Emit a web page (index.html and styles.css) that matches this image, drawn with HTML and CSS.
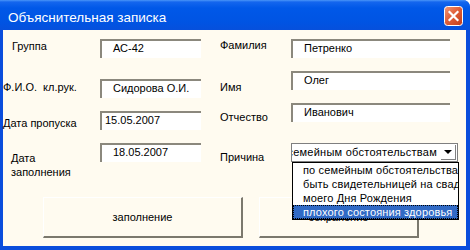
FILE: index.html
```html
<!DOCTYPE html>
<html lang="ru">
  <head>
    <meta charset="UTF-8" />
    <title>Объяснительная записка</title>
    <link rel="stylesheet" href="styles.css">
  </head>
  <body>
    <div class="window">
      <div class="titlebar">
        <span class="title">Объяснительная записка</span>
        <span class="close">
          <svg width="19" height="20" viewBox="0 0 19 20">
            <defs>
              <linearGradient id="cg" x1="0" y1="0" x2="1" y2="1">
                <stop offset="0" stop-color="#f29a78" />
                <stop offset="0.45" stop-color="#e0603a" />
                <stop offset="1" stop-color="#c23c18" />
              </linearGradient>
            </defs>
            <rect x="0.5" y="0.5" width="18" height="19" rx="3" fill="url(#cg)" stroke="#fff" />
            <path d="M5.5 6 L13.5 14 M13.5 6 L5.5 14" stroke="#fff" stroke-width="2.2" stroke-linecap="square" />
          </svg>
        </span>
      </div>
      <div class="client">
        <div class="fields">
          <div class="col left">
            <div class="row l1"><span class="lbl">Группа</span><div class="box">АС-42</div></div>
            <div class="row l2"><span class="lbl">Ф.И.О.&nbsp; кл.рук.</span><div class="box">Сидорова О.И.</div></div>
            <div class="row l3"><span class="lbl">Дата пропуска</span><div class="box tight">15.05.2007</div></div>
            <div class="row l4"><span class="lbl">Дата<br />заполнения</span><div class="box">18.05.2007</div></div>
          </div>
          <div class="col right">
            <div class="row r1"><span class="lbl">Фамилия</span><div class="box">Петренко</div></div>
            <div class="row r2"><span class="lbl">Имя</span><div class="box">Олег</div></div>
            <div class="row r3"><span class="lbl">Отчество</span><div class="box">Иванович</div></div>
            <div class="row r4">
              <span class="lbl">Причина</span>
              <div class="combo">
                <div class="combo-text"><span>по семейным обстоятельствам</span></div>
                <div class="combo-btn"><i class="arrow"></i></div>
                <div class="droplist">
                  <div class="item">по семейным обстоятельствам</div>
                  <div class="item">быть свидетельницей на свадьбе</div>
                  <div class="item">моего Дня Рождения</div>
                  <div class="item sel">плохого состояния здоровья</div>
                </div>
              </div>
            </div>
          </div>
        </div>
        <div class="buttons">
          <div class="btn b1">заполнение</div>
          <div class="btn b2">сохранение</div>
        </div>
      </div>
    </div>
  </body>
</html>
```

FILE: styles.css
```css
* {
  margin: 0;
  padding: 0;
  box-sizing: border-box;
}
html,
body {
  width: 470px;
  height: 250px;
  overflow: hidden;
  background: #fff;
}
body {
  font-family: "Liberation Sans", Arial, sans-serif;
  font-size: 11px;
  line-height: 13px;
  color: #000;
}
.window {
  width: 470px;
  height: 250px;
  background: #0a4ddc;
  border-top-right-radius: 7px;
  display: flex;
  flex-direction: column;
}
.titlebar {
  height: 30px;
  display: flex;
  align-items: center;
  justify-content: space-between;
  padding: 0 7px 0 8px;
  border-top-right-radius: 7px;
  background: linear-gradient(#4a95f8 0, #1466ee 2px, #0058e8 8px, #0054e3 22px, #0650dc 30px);
}
.title {
  color: #fff;
  font-size: 13.5px;
  line-height: 16px;
  padding-top: 5px;
}
.close {
  display: flex;
  margin-top: 2px;
}
.client {
  flex: 1;
  margin: 0 4px 4px 3px;
  background: #fffbf0;
}
.fields {
  display: flex;
  align-items: flex-start;
  padding-top: 9px;
}
.left {
  width: 198px;
}
.right {
  margin-left: 19px;
}
.row {
  display: flex;
  align-items: flex-start;
}
.left .lbl {
  width: 97px;
}
.right .lbl {
  width: 71px;
}
.box {
  height: 19px;
  padding: 1px 0 0 11px;
  background: #fff;
  border-top: 2px solid #8b887d;
  border-left: 2px solid #8b887d;
  white-space: nowrap;
  overflow: hidden;
}
.box.tight {
  padding-left: 3px;
}
.left .box {
  width: 101px;
}
.right .box {
  width: 159px;
}
.l1 {
  height: 40px;
}
.l1 .lbl {
  padding: 1px 0 0 9px;
}
.l2 {
  height: 32px;
}
.l2 .lbl {
  padding-top: 2px;
}
.l3 {
  height: 32px;
}
.l3 .lbl {
  padding-top: 6px;
}
.l4 {
  height: 34px;
}
.l4 .lbl {
  padding: 8px 0 0 8px;
  line-height: 14px;
}
.r1,
.r2 {
  height: 32px;
}
.r2 .lbl {
  padding-top: 10px;
}
.r3 {
  height: 40px;
}
.r3 .lbl,
.r4 .lbl {
  padding-top: 8px;
}
.combo {
  position: relative;
  width: 167px;
  height: 19px;
  display: flex;
  background: #fff;
  border: 1px solid #7f7f7f;
}
.combo-text {
  flex: 1;
  display: flex;
  justify-content: flex-end;
  overflow: hidden;
  white-space: nowrap;
  padding-right: 3px;
  line-height: 17px;
  letter-spacing: 0.25px;
}
.combo-btn {
  width: 15px;
  height: 15px;
  margin: 1px;
  display: flex;
  align-items: center;
  justify-content: center;
  background: #fff;
  border-right: 1px solid #808080;
  border-bottom: 1px solid #808080;
}
.arrow {
  width: 0;
  height: 0;
  border-left: 4px solid transparent;
  border-right: 4px solid transparent;
  border-top: 4px solid #000;
}
.droplist {
  position: absolute;
  left: 0;
  top: 18px;
  width: 167px;
  background: #fff;
  border: 1px solid #000;
  z-index: 2;
}
.item {
  height: 14px;
  line-height: 14px;
  padding-left: 10px;
  white-space: nowrap;
  overflow: hidden;
  letter-spacing: 0.15px;
}
.item.sel {
  background: #316ac5;
  color: #fff;
  border: 1px dotted #000;
  line-height: 12px;
  padding-left: 9px;
}
.buttons {
  display: flex;
  gap: 16px;
  padding-left: 40px;
  margin-top: 20px;
}
.btn {
  height: 41px;
  display: flex;
  align-items: center;
  justify-content: center;
  border-top: 1px solid #fff;
  border-left: 1px solid #fff;
  border-right: 2px solid #7b786d;
  border-bottom: 2px solid #7b786d;
}
.b1 {
  width: 200px;
}
.b2 {
  width: 160px;
}
```
